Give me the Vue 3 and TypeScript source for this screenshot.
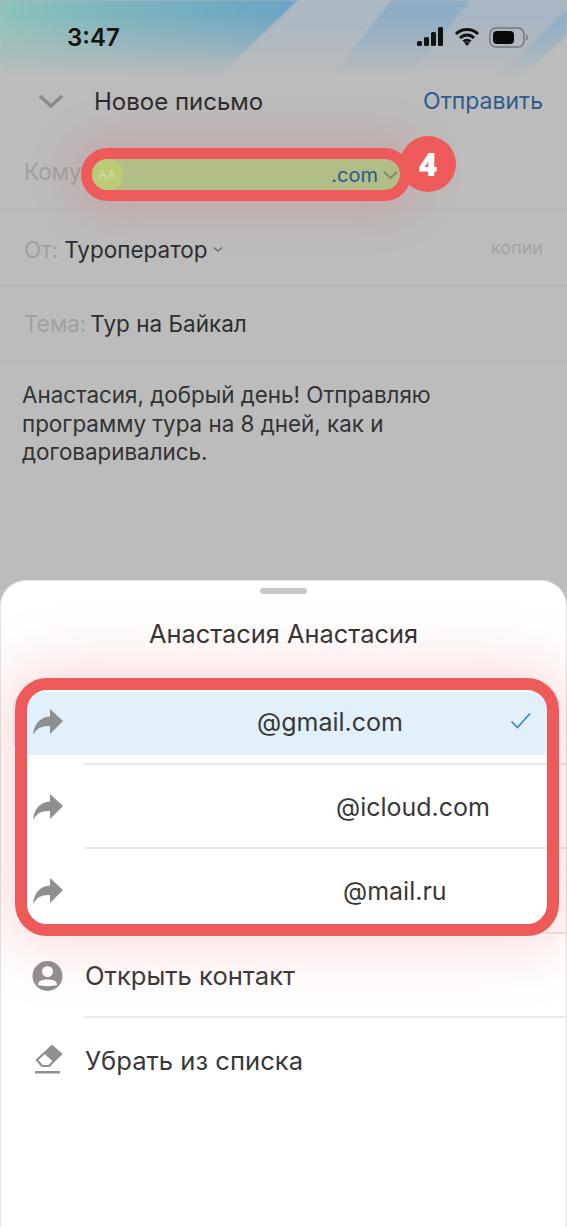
<script setup lang="ts">
interface Address { text: string; indent: number; selected: boolean }
const addresses: Address[] = [
  { text: '@gmail.com', indent: 257, selected: true },
  { text: '@icloud.com', indent: 336, selected: false },
  { text: '@mail.ru', indent: 343, selected: false },
]
</script>

<template>
  <div class="page">
    <svg class="wash" width="567" height="90" viewBox="0 0 567 90" aria-hidden="true">
      <defs>
        <linearGradient id="base" x1="0" y1="0" x2="1" y2="0">
          <stop offset="0" stop-color="#8cc3b9" />
          <stop offset="0.28" stop-color="#78b0c0" />
          <stop offset="0.5" stop-color="#6ca4c5" />
          <stop offset="1" stop-color="#8eaec6" />
        </linearGradient>
        <linearGradient id="fade" x1="0" y1="0" x2="0" y2="1">
          <stop offset="0.15" stop-color="#bcbcbc" stop-opacity="0" />
          <stop offset="0.5" stop-color="#bcbcbc" stop-opacity="0.45" />
          <stop offset="0.85" stop-color="#bcbcbc" stop-opacity="1" />
        </linearGradient>
      </defs>
      <rect width="567" height="90" fill="url(#base)" />
      <polygon points="298,0 392,0 320,90 205,90" fill="#adb9c3" />
      <polygon points="392,0 470,0 400,90 320,90" fill="#8fadc5" />
      <polygon points="470,0 567,0 567,10 480,90 400,90" fill="#a8b5c5" />
      <polygon points="567,35 567,90 510,90" fill="#bcbcbc" />
      <rect width="567" height="90" fill="url(#fade)" />
    </svg>

    <div class="status">
      <span class="time">3:47</span>
      <div class="status-icons">
        <svg width="29" height="20" viewBox="0 0 29 20">
          <rect x="1" y="14" width="5" height="5" rx="1.5" fill="#111" />
          <rect x="8" y="10" width="5" height="9" rx="1.5" fill="#111" />
          <rect x="15" y="5" width="5" height="14" rx="1.5" fill="#111" />
          <rect x="22" y="0" width="5" height="19" rx="1.5" fill="#111" />
        </svg>
        <svg width="26" height="20" viewBox="0 0 26 20">
          <path d="M2 7 C8 1 18 1 24 7 M6 11 C10 7 16 7 20 11 M9.5 14.5 C11.5 12.8 14.5 12.8 16.500 14.500" fill="none" stroke="#111" stroke-width="3" />
          <path d="M10.500 16 L13 19 L15.500 16 C14 14.800 12 14.800 10.500 16Z" fill="#111" />
        </svg>
        <svg width="39" height="21" viewBox="0 0 39 21">
          <rect x="1" y="1" width="34" height="19" rx="6" fill="none" stroke="#777" stroke-width="1.500" />
          <rect x="4" y="4" width="21" height="13" rx="4" fill="#080808" />
          <path d="M37 8 C38.500 9 38.500 12 37 13" fill="none" stroke="#777" stroke-width="1.500" />
        </svg>
      </div>
    </div>

    <header class="header">
      <svg class="back" width="28" height="16" viewBox="0 0 28 16">
        <path d="M3 3 L14 13 L25 3" fill="none" stroke="#8b8b8b" stroke-width="3.500" />
      </svg>
      <span class="title">Новое письмо</span>
      <span class="send">Отправить</span>
    </header>

    <div class="field to">
      <span class="label">Кому</span>
      <div class="pill">
        <span class="avatar">AA</span>
        <span class="domain">.com</span>
        <svg width="15" height="10" viewBox="0 0 15 10">
          <path d="M1 2 L7.500 8 L14 2" fill="none" stroke="#7d8a6c" stroke-width="1.800" />
        </svg>
        <span class="badge">4</span>
      </div>
    </div>

    <div class="field from-field">
      <span class="label">От:</span>
      <span class="value">Туроператор</span>
      <svg class="mini" width="10" height="7" viewBox="0 0 10 7">
        <path d="M1 1.500 L5 5 L9 1.500" fill="none" stroke="#666" stroke-width="1.300" />
      </svg>
      <span class="copies">копии</span>
    </div>

    <div class="field subject-field">
      <span class="label">Тема:</span>
      <span class="value">Тур на Байкал</span>
    </div>

    <p class="body">Анастасия, добрый день! Отправляю<br />программу тура на 8 дней, как и<br />договаривались.</p>

    <section class="sheet">
      <div class="handle"></div>
      <h2 class="sheet-title">Анастасия Анастасия</h2>
      <div class="frame"></div>
      <ul class="list">
        <li v-for="a in addresses" :key="a.text" class="row" :class="{ selected: a.selected }">
          <svg class="icon" width="32" height="26" viewBox="0 0 32 26">
            <path d="M18 0 L31 12 L18 25 L18 17 C10 16.500 5 19 1 26 C2 15 8 8 18 7.500 Z" fill="#8f8f8f" />
          </svg>
          <span class="addr" :style="{ left: a.indent + 'px' }">{{ a.text }}</span>
          <svg v-if="a.selected" class="check" width="22" height="18" viewBox="0 0 22 18">
            <path d="M1.500 9.500 L7.500 15.500 L20 1.500" fill="none" stroke="#3b83d8" stroke-width="1.700" />
          </svg>
        </li>
        <li class="row">
          <svg class="icon" width="32" height="32" viewBox="0 0 32 32">
            <circle cx="15.500" cy="16" r="15" fill="#928e90" />
            <circle cx="15.500" cy="11.500" r="5.500" fill="#fff" />
            <path d="M6 25 C6 20 11 19.500 15.500 19.500 C20 19.500 25 20 25 25 C20 26.500 11 26.500 6 25Z" fill="#fff" />
          </svg>
          <span class="text">Открыть контакт</span>
        </li>
        <li class="row last">
          <svg class="icon" width="32" height="30" viewBox="0 0 32 30">
            <path d="M5 15 L20 1 L29 9 L17 21 L10 21 Z" fill="#fff" stroke="#8f8f8f" stroke-width="2.200" />
            <path d="M12 8.500 L20 1 L29 9 L21 16.500 Z" fill="#8f8f8f" />
            <rect x="3" y="26" width="25" height="2.500" fill="#8f8f8f" />
          </svg>
          <span class="text">Убрать из списка</span>
        </li>
      </ul>
    </section>
  </div>
</template>

<style scoped>
.page {
  position: relative;
  width: 567px;
  height: 1227px;
  overflow: hidden;
  display: flex;
  flex-direction: column;
  background: #bcbcbc;
  font-family: Inter, Roboto, "Liberation Sans", sans-serif;
  color: #2e2e2e;
}
.wash {
  position: absolute;
  top: 0;
  left: 0;
  filter: blur(1px);
}
.status {
  position: relative;
  height: 68px;
  flex: none;
  display: flex;
  align-items: center;
  justify-content: space-between;
  padding: 6px 39px 0 67px;
  box-sizing: border-box;
}
.time {
  font-weight: 600;
  font-size: 24px;
  color: #141414;
}
.status-icons {
  display: flex;
  align-items: center;
  gap: 9px;
}
.header {
  position: relative;
  height: 66px;
  flex: none;
  display: flex;
  align-items: center;
  padding: 0 24px 0 37px;
  box-sizing: border-box;
}
.back {
  margin-right: 29px;
}
.title {
  font-size: 24px;
  color: #2c2c2c;
  flex: 1;
}
.send {
  font-size: 23px;
  color: #2f5a8e;
}
.field {
  position: relative;
  height: 76px;
  flex: none;
  display: flex;
  align-items: center;
  padding: 0 24px;
  box-sizing: border-box;
  border-bottom: 1px solid #b3b3b3;
  font-size: 22.500px;
}
.from-field {
  padding-top: 4px;
}
.from-field .copies {
  margin-top: -4px;
}
.subject-field .value {
  margin-left: 4px;
}
.label {
  color: #a0a0a0;
}
.value {
  margin-left: 6px;
  color: #2e2e2e;
}
.mini {
  margin-left: 5px;
}
.copies {
  margin-left: auto;
  font-size: 18px;
  color: #a4a4a4;
}
.to {
  padding-right: 0;
}
.pill {
  position: absolute;
  left: 81px;
  top: 14px;
  width: 330px;
  height: 53px;
  box-sizing: border-box;
  border: 11px solid #ee5a5a;
  border-radius: 27px;
  background: #b2bd87;
  display: flex;
  align-items: center;
  box-shadow: 0 0 44px 10px rgba(238, 90, 90, 0.22);
}
.avatar {
  width: 31px;
  height: 31px;
  border-radius: 50%;
  background: #bccb76;
  color: #d5dcae;
  font-size: 12px;
  display: flex;
  align-items: center;
  justify-content: center;
  letter-spacing: 1px;
}
.domain {
  margin-left: auto;
  margin-right: 5px;
  font-size: 20px;
  color: #2a5a8c;
}
.pill svg {
  margin-right: 2px;
}
.badge {
  position: absolute;
  right: -56px;
  top: -23px;
  width: 56px;
  height: 56px;
  border-radius: 50%;
  background: #ee5a5a;
  color: #fff;
  font-family: "Open Sans", sans-serif;
  font-weight: 800;
  font-size: 31px;
  display: flex;
  align-items: center;
  justify-content: center;
}
.body {
  position: relative;
  margin: 0;
  padding: 19px 22px 0;
  flex: 1;
  font-size: 22.400px;
  line-height: 28.500px;
  color: #333;
}
.sheet {
  position: relative;
  flex: none;
  height: 647px;
  box-sizing: border-box;
  background: #fff;
  border-radius: 26px 26px 0 0;
  border: 1px solid #e4e4e4;
  border-bottom: 0;
}
.handle {
  width: 47px;
  height: 6px;
  border-radius: 3px;
  background: #c8c8c8;
  margin: 7px auto 0;
}
.sheet-title {
  margin: 0;
  height: 86px;
  line-height: 80px;
  text-align: center;
  font-size: 25.400px;
  font-weight: 400;
  color: #333;
}
.frame {
  position: absolute;
  left: 14px;
  top: 97px;
  width: 544px;
  height: 258px;
  box-sizing: border-box;
  border: 12px solid #ee5a5a;
  border-radius: 32px;
  box-shadow: 0 0 60px 16px rgba(238, 90, 90, 0.2);
  z-index: 2;
}
.list {
  list-style: none;
  margin: 0;
  padding: 0;
}
.row {
  position: relative;
  height: 84.500px;
  display: flex;
  align-items: center;
  padding-left: 31px;
  box-sizing: border-box;
  font-size: 25.600px;
  color: #383838;
}
.row::after {
  content: "";
  position: absolute;
  left: 83px;
  right: 0;
  bottom: 0;
  height: 2px;
  background: #e8e8e8;
}
.row.last::after {
  display: none;
}
.row.selected::before {
  content: "";
  position: absolute;
  left: 12px;
  right: 10px;
  top: 12px;
  bottom: 10px;
  background: #e1f0fb;
  border-radius: 14px 0 0 14px;
}
.icon {
  position: relative;
  flex: none;
}
.addr {
  position: absolute;
  margin-left: -1px;
  font-size: 25px;
}
.check {
  position: absolute;
  left: 509px;
  top: 32px;
}
.text {
  position: absolute;
  left: 84px;
}
</style>

<style>
html, body {
  margin: 0;
  background: #bcbcbc;
}
</style>
